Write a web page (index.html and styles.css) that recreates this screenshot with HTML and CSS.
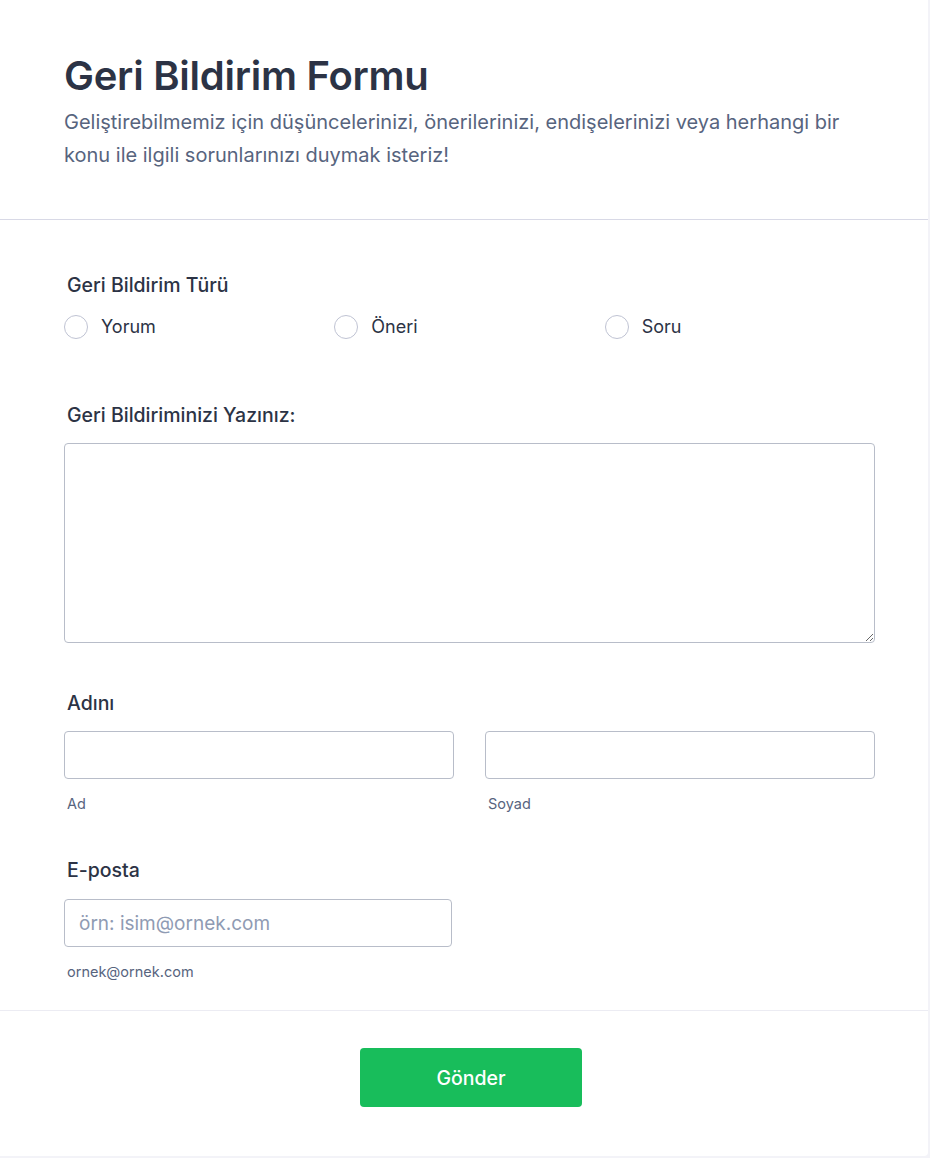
FILE: index.html
```
<!DOCTYPE html>
<html>
<head>
  <title>Geri Bildirim Formu</title>
  <meta charset="UTF-8">
  <link rel="stylesheet" href="styles.css">
</head>
<body>
  <div class="card">
    <div class="header">
      <h1>Geri Bildirim Formu</h1>
      <p>Geliştirebilmemiz için düşüncelerinizi, önerilerinizi, endişelerinizi veya herhangi bir konu ile ilgili sorunlarınızı duymak isteriz!</p>
    </div>

    <form class="form">
      <div class="field radios">
        <div class="label">Geri Bildirim Türü</div>
        <div class="options">
          <label class="option"><input type="radio" name="tur"><span class="dot"></span>Yorum</label>
          <label class="option"><input type="radio" name="tur"><span class="dot"></span>Öneri</label>
          <label class="option"><input type="radio" name="tur"><span class="dot"></span>Soru</label>
        </div>
      </div>

      <div class="field">
        <label class="label" for="mesaj">Geri Bildiriminizi Yazınız:</label>
        <textarea id="mesaj"></textarea>
      </div>

      <div class="field names">
        <div class="label">Adını</div>
        <div class="name-row">
          <div class="col">
            <input type="text" id="ad">
            <label class="sub" for="ad">Ad</label>
          </div>
          <div class="col">
            <input type="text" id="soyad">
            <label class="sub" for="soyad">Soyad</label>
          </div>
        </div>
      </div>

      <div class="field last">
        <label class="label" for="eposta">E-posta</label>
        <input type="text" id="eposta" class="email" placeholder="örn: isim@ornek.com">
        <label class="sub" for="eposta">ornek@ornek.com</label>
      </div>
    </form>

    <div class="footer">
      <button type="button">Gönder</button>
    </div>
  </div>
</body>
</html>
```

FILE: styles.css
```
body {
  margin: 0;
  background: #f3f3f8;
  font-family: Inter, "Noto Sans", sans-serif;
  color: #2c3345;
}
.card {
  width: 928px;
  min-height: 1156px;
  background: #fff;
  box-sizing: border-box;
  border-radius: 0 0 4px 0;
}
.header {
  padding: 52px 64px 47px;
  border-bottom: 1px solid #d8d9e6;
}
.header h1 {
  margin: 0;
  font-size: 40px;
  font-weight: 600;
  line-height: 48px;
  letter-spacing: -0.25px;
  color: #2c3345;
}
.header p {
  margin: 6px 0 0;
  max-width: 790px;
  font-size: 20px;
  line-height: 33px;
  color: #57647e;
}
.form {
  padding: 51px 53px 28px 64px;
  border-bottom: 1px solid #ececf3;
}
.field {
  margin-bottom: 46px;
}
.field.radios {
  margin-bottom: 60px;
}
.field.names {
  margin-bottom: 42px;
}
.field.last {
  margin-bottom: 0;
}
.label {
  display: block;
  padding-left: 3px;
  font-size: 19.5px;
  font-weight: 500;
  line-height: 28px;
  color: #2c3345;
  margin-bottom: 14px;
}
.field.last .label {
  margin-bottom: 15px;
}
.options {
  display: grid;
  grid-template-columns: repeat(3, 1fr);
  margin-top: 1px;
}
.option {
  display: flex;
  align-items: center;
  font-size: 18px;
  line-height: 28px;
  color: #2c3345;
}
.option input {
  display: none;
}
.dot {
  width: 22px;
  height: 22px;
  border: 1px solid #bfc3d3;
  border-radius: 50%;
  margin-right: 13px;
}
textarea {
  display: block;
  width: 100%;
  height: 200px;
  box-sizing: border-box;
  border: 1px solid #b8bdc9;
  border-radius: 4px;
  font-family: inherit;
  font-size: 16px;
  padding: 10px 12px;
}
.name-row {
  display: flex;
  gap: 31px;
}
.col {
  flex: 1;
}
input[type="text"] {
  display: block;
  width: 100%;
  height: 48px;
  box-sizing: border-box;
  border: 1px solid #b8bdc9;
  border-radius: 4px;
  padding: 0 14px;
  font-family: inherit;
  font-size: 19px;
  color: #2c3345;
}
input.email {
  width: 388px;
}
input::placeholder {
  color: #8f9bb3;
}
.sub {
  display: block;
  padding-left: 3px;
  margin-top: 15px;
  font-size: 14.5px;
  line-height: 20px;
  color: #57647e;
}
.footer {
  display: flex;
  justify-content: center;
  padding: 37px 0 48px 14px;
}
.footer button {
  width: 222px;
  height: 59px;
  background: #18bd5b;
  border: none;
  border-radius: 4px;
  color: #fff;
  font-family: inherit;
  font-size: 19.5px;
  font-weight: 500;
  cursor: pointer;
}
```
